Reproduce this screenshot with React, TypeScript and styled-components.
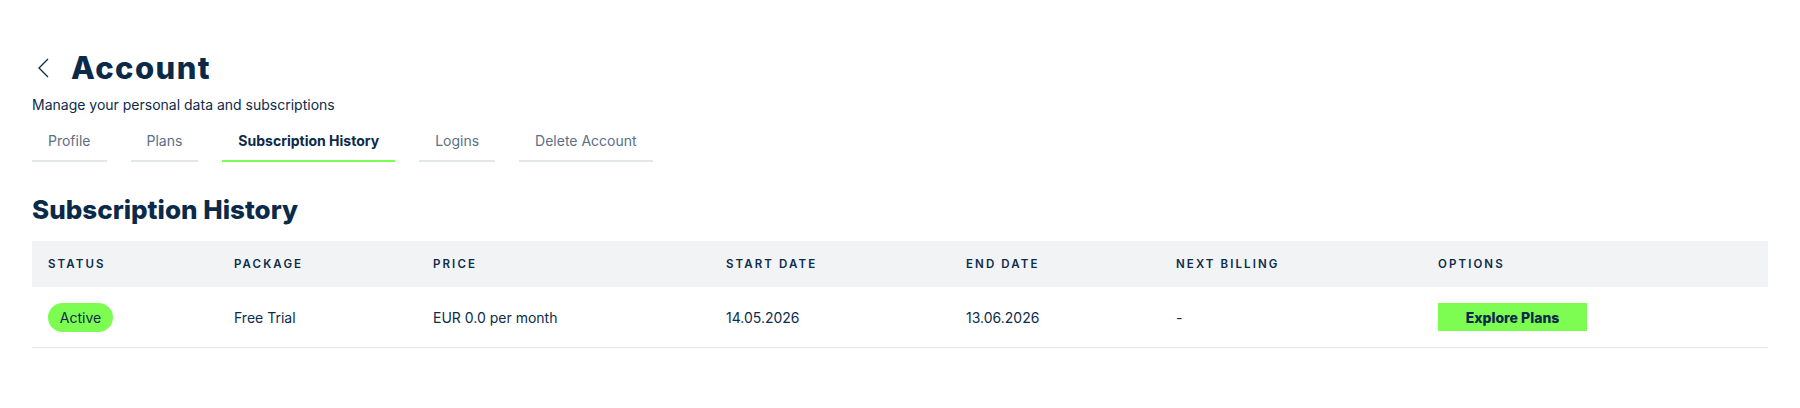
import styled, { createGlobalStyle } from "styled-components";

const GlobalStyle = createGlobalStyle`
  body {
    margin: 0;
    background: #ffffff;
    font-family: Inter, "Noto Sans", sans-serif;
    color: #0d2b4b;
  }
`;

const StyledPage = styled.div`
  padding: 50px 32px 0;
`;

const StyledTitleRow = styled.div`
  display: flex;
  align-items: center;
  gap: 22px;
  padding-left: 6px;
`;

const StyledBack = styled.button`
  display: flex;
  align-items: center;
  padding: 0;
  border: 0;
  background: none;
  cursor: pointer;

  svg {
    width: 11px;
    height: 20px;
  }
`;

const StyledTitle = styled.h1`
  margin: 0;
  font-family: Inter, sans-serif;
  font-size: 31px;
  font-weight: 800;
  letter-spacing: 1.4px;
  line-height: 36px;
  color: #0b2a4a;
`;

const StyledSubtitle = styled.p`
  margin: 10px 0 0;
  font-size: 14px;
  line-height: 18px;
  color: #0d2b4b;
`;

const StyledTabs = styled.div`
  display: flex;
  gap: 24px;
  margin-top: 10px;
`;

const StyledTab = styled.button<{ $active?: boolean }>`
  padding: 8px 16px 10px;
  border: 0;
  border-bottom: 2px solid ${(p) => (p.$active ? "#7dfd52" : "#e3e7eb")};
  background: none;
  font-family: Inter, sans-serif;
  font-size: 14px;
  line-height: 18px;
  font-weight: ${(p) => (p.$active ? 700 : 400)};
  color: ${(p) => (p.$active ? "#0b2a4a" : "#5a7085")};
  cursor: pointer;
`;

const StyledSectionTitle = styled.h2`
  margin: 32px 0 0;
  font-family: Inter, sans-serif;
  font-size: 26px;
  font-weight: 800;
  line-height: 32px;
  color: #0b2a4a;
`;

const StyledTable = styled.div`
  margin-top: 15px;
`;

const StyledRow = styled.div<{ $head?: boolean }>`
  display: grid;
  grid-template-columns: 186px 199px 293px 240px 210px 262px 1fr;
  align-items: center;
  height: ${(p) => (p.$head ? "46px" : "60px")};
  background: ${(p) => (p.$head ? "#f2f3f5" : "transparent")};
  border-bottom: ${(p) => (p.$head ? "0" : "1px solid #e4e5e7")};
`;

const StyledHeadCell = styled.div`
  padding-left: 16px;
  font-size: 11.5px;
  font-weight: 600;
  letter-spacing: 2.1px;
  color: #0d2b4b;
`;

const StyledCell = styled.div`
  padding-left: 16px;
  font-size: 14px;
  color: #0d2b4b;
`;

const StyledBadge = styled.span`
  display: inline-flex;
  align-items: center;
  justify-content: center;
  width: 65px;
  height: 29px;
  border-radius: 15px;
  background: #7dfd52;
  font-size: 14px;
  color: #0b2a4a;
`;

const StyledPlansButton = styled.button`
  width: 149px;
  height: 28px;
  border: 0;
  background: #7dfd52;
  font-family: Inter, sans-serif;
  font-size: 14px;
  font-weight: 800;
  color: #0b2a4a;
  cursor: pointer;
`;

const tabs = ["Profile", "Plans", "Subscription History", "Logins", "Delete Account"];
const heads = ["STATUS", "PACKAGE", "PRICE", "START DATE", "END DATE", "NEXT BILLING", "OPTIONS"];

export default function App() {
  return (
    <StyledPage>
      <GlobalStyle />
      <StyledTitleRow>
        <StyledBack aria-label="Back">
          <svg viewBox="0 0 11 20" fill="none">
            <path d="M10 1 1 10l9 9" stroke="#0b2a4a" strokeWidth="1.3" />
          </svg>
        </StyledBack>
        <StyledTitle>Account</StyledTitle>
      </StyledTitleRow>
      <StyledSubtitle>Manage your personal data and subscriptions</StyledSubtitle>
      <StyledTabs>
        {tabs.map((t) => (
          <StyledTab key={t} $active={t === "Subscription History"}>
            {t}
          </StyledTab>
        ))}
      </StyledTabs>
      <StyledSectionTitle>Subscription History</StyledSectionTitle>
      <StyledTable>
        <StyledRow $head>
          {heads.map((h) => (
            <StyledHeadCell key={h}>{h}</StyledHeadCell>
          ))}
        </StyledRow>
        <StyledRow>
          <StyledCell>
            <StyledBadge>Active</StyledBadge>
          </StyledCell>
          <StyledCell>Free Trial</StyledCell>
          <StyledCell>EUR 0.0 per month</StyledCell>
          <StyledCell>14.05.2026</StyledCell>
          <StyledCell>13.06.2026</StyledCell>
          <StyledCell>-</StyledCell>
          <StyledCell>
            <StyledPlansButton>Explore Plans</StyledPlansButton>
          </StyledCell>
        </StyledRow>
      </StyledTable>
    </StyledPage>
  );
}
